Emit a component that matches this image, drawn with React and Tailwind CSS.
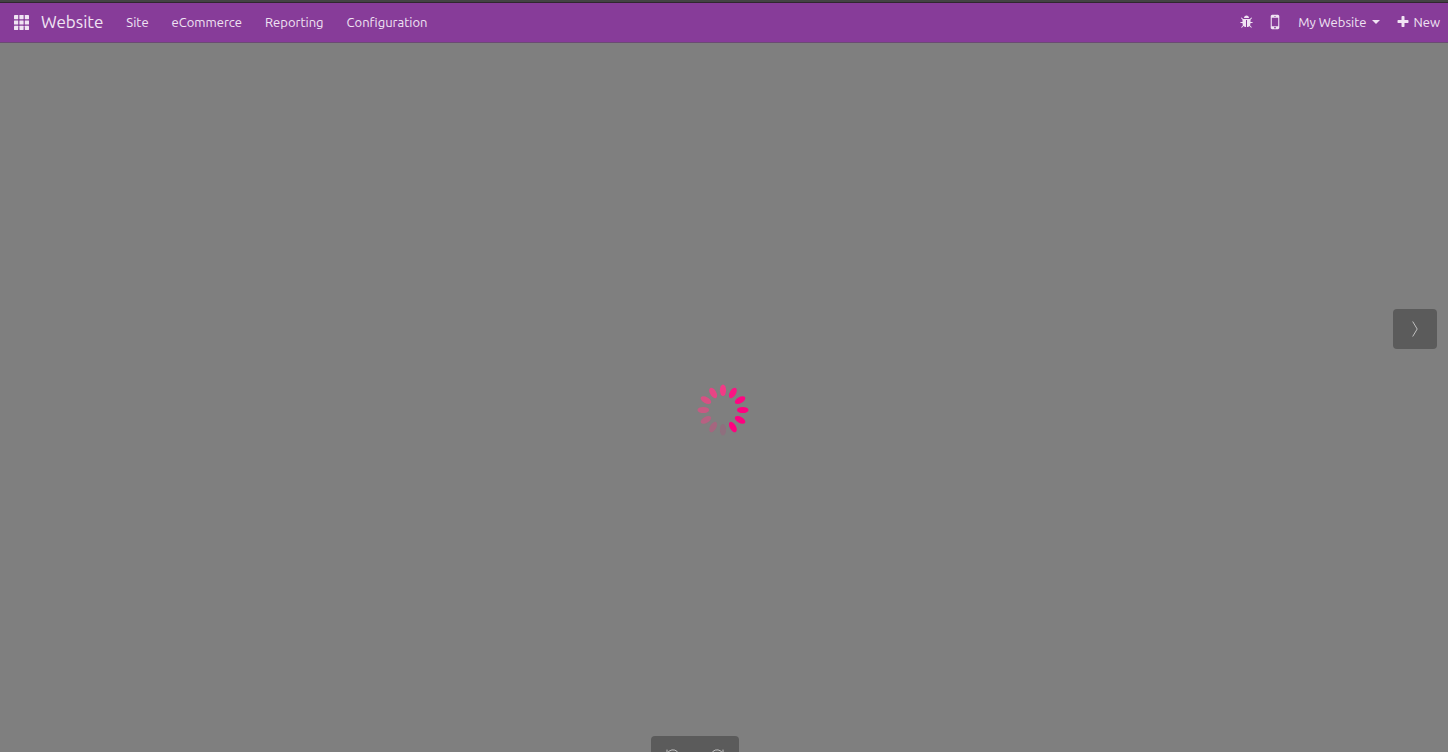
const NAV = ["Site", "eCommerce", "Reporting", "Configuration"];

const PETALS = [
  [0, "#f23a86"], [30, "#fb1483"], [60, "#ff0582"], [90, "#ff0080"], [120, "#ff0080"], [150, "#ff0080"],
  [180, "#8f6f7e"], [210, "#a5667f"], [240, "#b76182"], [270, "#c75a83"], [300, "#d85083"], [330, "#e64585"],
];

function BugIcon() {
  return (
    <svg viewBox="0 0 1792 1792" className="size-3.5" fill="currentColor" aria-hidden="true">
      <path d="M1632 960q0 26-19 45t-45 19h-224q0 171-67 290l208 209q19 19 19 45t-19 45q-18 19-45 19t-45-19l-198-197q-5 5-15 13t-42 28.5-65 36.5-82 29-97 13v-896h-128v896q-51 0-101.5-13.5t-87-33-66-39-43.5-32.5l-15-14-183 207q-20 21-48 21-24 0-43-16-19-18-20.5-44.5t15.5-46.5l202-227q-58-114-58-274h-224q-26 0-45-19t-19-45 19-45 45-19h224v-294l-173-173q-19-19-19-45t19-45 45-19 45 19l173 173h844l173-173q19-19 45-19t45 19 19 45-19 45l-173 173v294h224q26 0 45 19t19 45zm-480-576h-640q0-133 93.5-226.5t226.5-93.5 226.5 93.5 93.5 226.5z" />
    </svg>
  );
}

function MobileIcon() {
  return (
    <svg viewBox="0 0 1792 1792" className="size-5" fill="currentColor" aria-hidden="true">
      <path d="M976 1408q0-33-23.5-56.5t-56.5-23.5-56.5 23.5-23.5 56.5 23.5 56.5 56.5 23.5 56.5-23.5 23.5-56.5zm208-160v-704q0-13-9.5-22.5t-22.5-9.5h-512q-13 0-22.5 9.5t-9.5 22.5v704q0 13 9.5 22.5t22.5 9.5h512q13 0 22.5-9.5t9.5-22.5zm-192-848q0-16-16-16h-160q-16 0-16 16t16 16h160q16 0 16-16zm288-16v1024q0 52-38 90t-90 38h-512q-52 0-90-38t-38-90v-1024q0-52 38-90t90-38h512q52 0 90 38t38 90z" />
    </svg>
  );
}

function PlusIcon() {
  return (
    <svg viewBox="0 0 1792 1792" className="size-3.5" fill="currentColor" aria-hidden="true">
      <path d="M1600 736v192q0 40-28 68t-68 28h-416v416q0 40-28 68t-68 28h-192q-40 0-68-28t-28-68v-416h-416q-40 0-68-28t-28-68v-192q0-40 28-68t68-28h416v-416q0-40 28-68t68-28h192q40 0 68 28t28 68v416h416q40 0 68 28t28 68z" />
    </svg>
  );
}

function AppsIcon() {
  return (
    <svg viewBox="0 0 15 15" className="size-[15px]" fill="currentColor" aria-hidden="true">
      {[0, 5.4, 10.8].map((y) =>
        [0, 5.4, 10.8].map((x) => <rect key={`${x}-${y}`} x={x} y={y} width="4.2" height="4.2" rx="0.4" />)
      )}
    </svg>
  );
}

function Spinner() {
  return (
    <svg viewBox="-26 -26 52 52" className="size-[52px]" role="img" aria-label="Loading">
      {PETALS.map(([angle, color]) => (
        <ellipse key={angle} cx="0" cy="-19.7" rx="3.1" ry="5.8" fill={color} transform={`rotate(${angle})`} />
      ))}
    </svg>
  );
}

function RotateIcon({ flipped }) {
  return (
    <svg viewBox="0 0 16 16" className="size-4" fill="none" stroke="currentColor" aria-hidden="true">
      <g transform={flipped ? "translate(16 0) scale(-1 1)" : undefined}>
        <path d="M2.4 5.2A6.2 6.2 0 1 1 1.8 9" />
        <path d="M2 1.6v3.9h4" />
      </g>
    </svg>
  );
}

export default function App() {
  return (
    <div className="flex h-screen flex-col overflow-hidden bg-[#7f7f7f] font-['Ubuntu','Noto_Sans',sans-serif] text-[13px] leading-5 text-[#f0e4f3]">
      <div className="h-[3px] shrink-0 border-b border-[#30272f] bg-[#434343]" />
      <header className="flex h-10 shrink-0 items-center justify-between border-b border-[#6b4b73] bg-[#873c99] pr-2 pb-px pl-3.5">
        <nav className="flex items-center gap-[23px]" aria-label="Main">
          <div className="flex items-center gap-3">
            <button type="button" aria-label="Apps"><AppsIcon /></button>
            <a href="#website" className="text-[17px] leading-5">Website</a>
          </div>
          {NAV.map((item) => (
            <button key={item} type="button">{item}</button>
          ))}
        </nav>
        <div className="flex items-center gap-4">
          <div className="flex items-center gap-[11px]">
            <button type="button" aria-label="Debug"><BugIcon /></button>
            <button type="button" aria-label="Mobile preview"><MobileIcon /></button>
            <button type="button" className="flex items-center gap-1.5 pl-0.5">
              My Website
              <svg viewBox="0 0 8 4" className="h-1 w-2" fill="currentColor" aria-hidden="true"><path d="M0 0h8L4 4z" /></svg>
            </button>
          </div>
          <button type="button" className="flex items-center gap-[3px]"><PlusIcon />New</button>
        </div>
      </header>
      <main className="relative grid flex-1 place-items-center">
        <div className="pt-6 pr-0.5"><Spinner /></div>
        <button type="button" aria-label="Next" className="absolute top-[266px] right-[11px] grid h-10 w-11 place-items-center rounded bg-[#5b5b5b] text-[#c0c0c0]">
          <svg viewBox="0 0 6 16" className="h-4 w-1.5" fill="none" stroke="currentColor" aria-hidden="true"><path d="M.7.5 5.2 8 .7 15.5" /></svg>
        </button>
        <div className="absolute -bottom-6 left-[45%] -ml-px flex h-10 w-[88px] items-start rounded bg-[#5b5b5b] pt-3 text-[#c0c0c0]">
          <button type="button" aria-label="Undo" className="grid flex-1 place-items-center"><RotateIcon /></button>
          <button type="button" aria-label="Redo" className="grid flex-1 place-items-center"><RotateIcon flipped /></button>
        </div>
      </main>
    </div>
  );
}
